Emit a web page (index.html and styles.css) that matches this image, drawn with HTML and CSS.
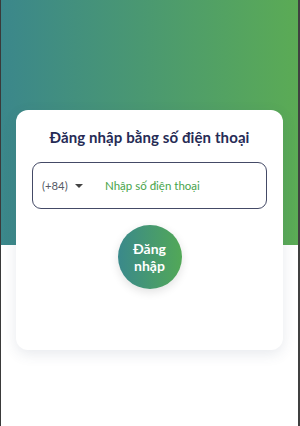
FILE: index.html
```html
<!DOCTYPE html>
<html lang="vi">
<head>
<meta charset="utf-8">
<link rel="stylesheet" href="styles.css">
</head>
<body>
<div class="screen">
  <div class="card">
    <h1 class="title">Đăng nhập bằng số điện thoại</h1>
    <div class="phone-field">
      <div class="code">
        <span class="code-text">(+84)</span>
        <span class="caret"></span>
      </div>
      <span class="placeholder">Nhập số điện thoại</span>
    </div>
    <div class="btn-wrap">
      <button class="login-btn">Đăng<br>nhập</button>
    </div>
  </div>
</div>
</body>
</html>
```

FILE: styles.css
```css
* { box-sizing: border-box; }
html, body { margin: 0; padding: 0; }
body {
  width: 300px;
  height: 426px;
  font-family: Lato, "Noto Sans", sans-serif;
  background: #fff;
  overflow: hidden;
}
.screen {
  height: 426px;
  padding: 110px 15px 0 15px;
  border-left: 1px solid #3a3a3a;
  border-right: 2px solid rgba(0,0,0,0.75);
  background: linear-gradient(to right, #3b878b, #5bab55) no-repeat;
  background-size: 100% 245px;
}
.card {
  height: 240px;
  background: #fff;
  border-radius: 12px;
  box-shadow: 0 4px 14px rgba(60, 70, 110, 0.12);
  padding: 17px 16px 0 16px;
}
.title {
  margin: 0;
  font-size: 15px;
  line-height: 20px;
  font-weight: 700;
  color: #262b55;
  text-align: center;
  letter-spacing: 0.1px;
}
.phone-field {
  margin-top: 15px;
  height: 47px;
  border: 1px solid #444a66;
  border-radius: 9px;
  display: flex;
  align-items: center;
  padding-left: 9px;
}
.code {
  display: flex;
  align-items: center;
  width: 63px;
}
.code-text {
  font-size: 11.3px;
  color: #555a66;
}
.caret {
  margin-left: 7px;
  width: 0;
  height: 0;
  border-left: 4px solid transparent;
  border-right: 4px solid transparent;
  border-top: 4px solid #444;
}
.placeholder {
  font-size: 11.5px;
  color: #48a44a;
}
.btn-wrap {
  margin-top: 16px;
  display: flex;
  justify-content: center;
}
.login-btn {
  width: 64px;
  height: 64px;
  border-radius: 50%;
  border: none;
  padding: 0;
  background: linear-gradient(to right, #3a898b, #52a857);
  color: #fff;
  font-family: Lato, "Noto Sans", sans-serif;
  font-weight: 700;
  font-size: 14px;
  line-height: 17px;
  box-shadow: 0 3px 10px rgba(0, 0, 0, 0.12);
}
```
